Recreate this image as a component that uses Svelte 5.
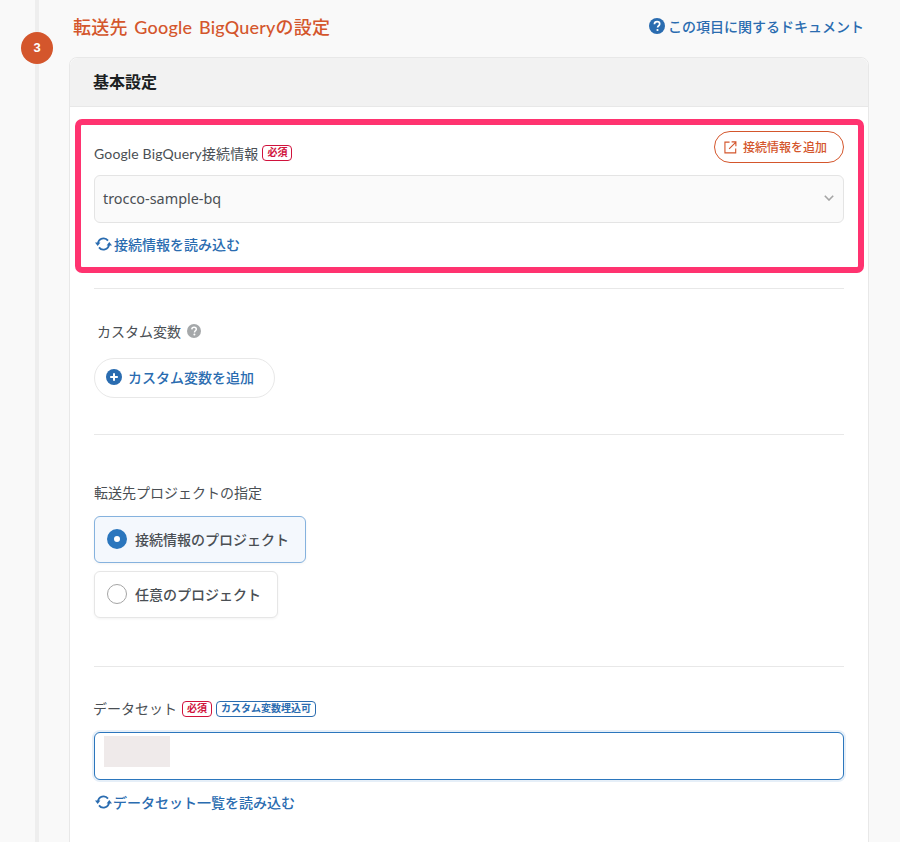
<script>
    const projects = [
        {label: '接続情報のプロジェクト', checked: true},
        {label: '任意のプロジェクト', checked: false}
    ]
</script>

{#snippet reload()}
    <svg class="reloadIcon" viewBox="0 0 17 16" width="17" height="16" fill="none" stroke="#2a6cb0" stroke-width="1.8">
        <path d="M3 7.4A5.6 5.6 0 0 1 13 4.6"/>
        <path d="M14 8.6A5.6 5.6 0 0 1 4 11.4"/>
        <path d="M0 6.6h5.4L2.7 10z" fill="#2a6cb0" stroke="none"/>
        <path d="M17 9.4h-5.4L14.3 6z" fill="#2a6cb0" stroke="none"/>
    </svg>
{/snippet}

<div class="page">
    <div class="rail"></div>
    <div class="stepNo">3</div>

    <div class="titleRow">
        <h2>転送先 Google BigQueryの設定</h2>
        <div class="docLink">
            <svg viewBox="0 0 16 16" width="16" height="16">
                <circle cx="8" cy="8" r="8" fill="#2a6cb0"/>
                <path d="M5.4 6.2C5.5 4.6 6.6 3.7 8.1 3.7c1.5 0 2.6.9 2.6 2.2 0 1.9-2.1 1.8-2.1 3.7" fill="none" stroke="#fff" stroke-width="1.7"/>
                <circle cx="8.5" cy="12" r="1.1" fill="#fff"/>
            </svg>
            <span>この項目に関するドキュメント</span>
        </div>
    </div>

    <div class="card">
        <div class="cardHead">基本設定</div>
        <div class="cardBody">
            <div class="connSection">
                <div class="highlight"></div>
                <div class="connTop">
                    <span class="label">Google BigQuery接続情報</span>
                    <span class="badge red">必須</span>
                    <button class="addConn">
                        <svg viewBox="0 0 14 14" width="13" height="13" fill="none" stroke="#d4562c" stroke-width="1.2">
                            <path d="M6 1.2H1v11.6h11.6V8"/>
                            <path d="M5.5 8.5 12.6 1.4M8.2 1h4.6v4.6"/>
                        </svg>
                        接続情報を追加
                    </button>
                </div>
                <div class="select">
                    <span>trocco-sample-bq</span>
                    <svg viewBox="0 0 10 6" width="10" height="6" fill="none" stroke="#a5a5a5" stroke-width="1.6">
                        <path d="M.8.8 5 5l4.2-4.2"/>
                    </svg>
                </div>
                <div class="reload">{@render reload()}接続情報を読み込む</div>
            </div>

            <hr class="first"/>

            <div class="customSection">
                <div class="customLabel">
                    カスタム変数
                    <svg viewBox="0 0 14 14" width="14" height="14">
                        <circle cx="7" cy="7" r="7" fill="#a5a8aa"/>
                        <path d="M4.8 5.4C4.9 4 5.8 3.3 7.1 3.3c1.3 0 2.2.8 2.2 1.9 0 1.6-1.8 1.6-1.8 3.2" fill="none" stroke="#fff" stroke-width="1.5"/>
                        <circle cx="7.4" cy="10.5" r="1" fill="#fff"/>
                    </svg>
                </div>
                <button class="addVar">
                    <svg viewBox="0 0 16 16" width="16" height="16">
                        <circle cx="8" cy="8" r="8" fill="#2a6cb0"/>
                        <path d="M8 4.2v7.6M4.2 8h7.6" stroke="#fff" stroke-width="2"/>
                    </svg>
                    カスタム変数を追加
                </button>
            </div>

            <hr/>

            <div class="projectSection">
                <div class="plainLabel">転送先プロジェクトの指定</div>
                <div class="radios">
                    {#each projects as p}
                        <div class="radio" class:on={p.checked}>
                            <span class="dot"></span>
                            {p.label}
                        </div>
                    {/each}
                </div>
            </div>

            <hr class="third"/>

            <div class="datasetSection">
                <div class="datasetTop">
                    <span class="datasetLabel">データセット</span>
                    <span class="badge red">必須</span>
                    <span class="badge blue">カスタム変数埋込可</span>
                </div>
                <div class="input"><div class="masked"></div></div>
                <div class="reload dataset">{@render reload()}データセット一覧を読み込む</div>
            </div>
        </div>
    </div>
</div>

<style>
    :global(body){
        background: #f9f9f9;
    }
    .page{
        position: relative;
        height: 842px;
        overflow: hidden;
        padding-left: 69px;
        padding-right: 31px;
        font-family: Lato, "Noto Sans CJK JP", sans-serif;
        color: #4a4f54;
    }
    .rail{
        position: absolute;
        left: 35px;
        top: 0;
        bottom: 0;
        width: 4px;
        background: #eeeeee;
    }
    .stepNo{
        position: absolute;
        left: 21px;
        top: 32px;
        width: 32px;
        height: 32px;
        border-radius: 50%;
        background: #d4562c;
        color: #fff;
        font: bold 13px/32px "Liberation Sans", sans-serif;
        text-align: center;
    }
    .titleRow{
        display: flex;
        justify-content: space-between;
        align-items: center;
        height: 57px;
        padding: 0 5px 5px 4px;
        box-sizing: border-box;
    }
    h2{
        margin: 0;
        font-size: 18px;
        font-weight: 500;
        letter-spacing: 0.2px;
        word-spacing: 2px;
        color: #d4562c;
    }
    .docLink{
        display: flex;
        align-items: center;
        gap: 3px;
        font-size: 14px;
        font-weight: 500;
        color: #2a6cb0;
    }
    .card{
        background: #fff;
        border: 1px solid #e8e8e8;
        border-radius: 8px 8px 0 0;
    }
    .cardHead{
        height: 48px;
        line-height: 47px;
        padding-left: 23px;
        background: #f2f2f2;
        border-bottom: 1px solid #e8e8e8;
        border-radius: 8px 8px 0 0;
        font-size: 16px;
        font-weight: 700;
        color: #1c1f22;
    }
    .cardBody{
        padding: 24px 24px 60px;
    }
    .connSection{
        position: relative;
    }
    .highlight{
        position: absolute;
        left: -19px;
        right: -20px;
        top: -12px;
        height: 154px;
        box-sizing: border-box;
        border: 6px solid #ff3370;
        border-radius: 7px;
        pointer-events: none;
    }
    .connTop{
        display: flex;
        align-items: center;
        height: 32px;
        margin-bottom: 12px;
    }
    .label{
        font-size: 14px;
        letter-spacing: 0.15px;
        margin-right: 4px;
        margin-top: 11px;
    }
    .badge{
        box-sizing: border-box;
        height: 16px;
        padding: 0 4px;
        font-size: 10px;
        line-height: 13px;
        font-weight: 700;
        border: 1px solid;
        border-radius: 4px;
        background: #fff;
    }
    .connTop .badge{
        margin-top: 11px;
    }
    .badge.red{
        color: #d0123c;
        border-color: #d0123c;
    }
    .badge.blue{
        color: #2a6cb0;
        border-color: #2a6cb0;
    }
    .addConn{
        display: flex;
        align-items: center;
        gap: 6px;
        box-sizing: border-box;
        width: 130px;
        height: 32px;
        margin-left: auto;
        padding: 0 0 0 9px;
        background: #fff;
        border: 1px solid #d4562c;
        border-radius: 16px;
        color: #d4562c;
        font: 500 12px "Noto Sans", "Noto Sans CJK JP", sans-serif;
    }
    .select{
        display: flex;
        align-items: center;
        justify-content: space-between;
        box-sizing: border-box;
        height: 48px;
        padding: 0 9px 2px 8px;
        background: #fafafa;
        border: 1px solid #e4e4e4;
        border-radius: 6px;
        font-family: "Noto Sans", sans-serif;
        font-size: 14.4px;
    }
    .reload{
        display: flex;
        align-items: center;
        box-sizing: border-box;
        height: 20px;
        margin-top: 12px;
        padding-bottom: 2px;
        font-size: 14px;
        font-weight: 500;
        color: #2a6cb0;
    }
    .reload.dataset{
        margin-top: 13px;
    }
    .reload.dataset .reloadIcon{
        margin-right: 1px;
    }
    .reloadIcon{
        margin-left: 1px;
        margin-right: 2px;
    }
    hr{
        margin: 0;
        border: none;
        border-top: 1px solid #e8e8e8;
    }
    hr.first{
        margin-top: 33px;
    }
    .customSection{
        padding: 33px 0 36px;
    }
    .customLabel{
        display: flex;
        align-items: center;
        gap: 6px;
        box-sizing: border-box;
        height: 20px;
        padding: 0 0 2px 3px;
        font-size: 14px;
    }
    .addVar{
        display: flex;
        align-items: center;
        gap: 6px;
        box-sizing: border-box;
        width: 181px;
        height: 40px;
        margin-top: 16px;
        padding: 0 0 2px 11px;
        background: #fff;
        border: 1px solid #e8e8e8;
        border-radius: 20px;
        color: #2a6cb0;
        font: 500 14px "Noto Sans", "Noto Sans CJK JP", sans-serif;
    }
    .projectSection{
        padding-top: 49px;
    }
    .plainLabel{
        height: 20px;
        line-height: 18px;
        font-size: 14px;
    }
    .radios{
        display: flex;
        flex-direction: column;
        align-items: flex-start;
        gap: 8px;
        margin-top: 12px;
    }
    .radio{
        display: flex;
        align-items: center;
        gap: 8px;
        box-sizing: border-box;
        height: 47px;
        padding: 0 16px 2px 12px;
        background: #fff;
        border: 1px solid #e6e6e6;
        border-radius: 6px;
        box-shadow: 0 1px 3px rgba(0, 0, 0, 0.05);
        font-size: 14px;
        font-weight: 500;
    }
    .radio.on{
        background: #f4f8fd;
        border-color: #85b2de;
    }
    .dot{
        box-sizing: border-box;
        width: 20px;
        height: 20px;
        background: #fff;
        border: 1px solid #a5a5a5;
        border-radius: 50%;
    }
    .radio.on .dot{
        border: 7px solid #2b76bd;
    }
    hr.third{
        margin-top: 48px;
    }
    .datasetSection{
        padding-top: 32px;
    }
    .datasetTop{
        display: flex;
        align-items: center;
        gap: 4px;
        height: 20px;
    }
    .datasetLabel{
        font-size: 14px;
        margin-left: -1px;
        margin-right: 1px;
        padding-bottom: 2px;
    }
    .input{
        box-sizing: border-box;
        height: 48px;
        margin-top: 13px;
        padding: 3px 9px;
        background: #fff;
        border: 1px solid #2b76bd;
        border-radius: 6px;
        box-shadow: 0 0 0 2px #e6eff8;
    }
    .masked{
        width: 66px;
        height: 31px;
        background: #efeaea;
    }
</style>
